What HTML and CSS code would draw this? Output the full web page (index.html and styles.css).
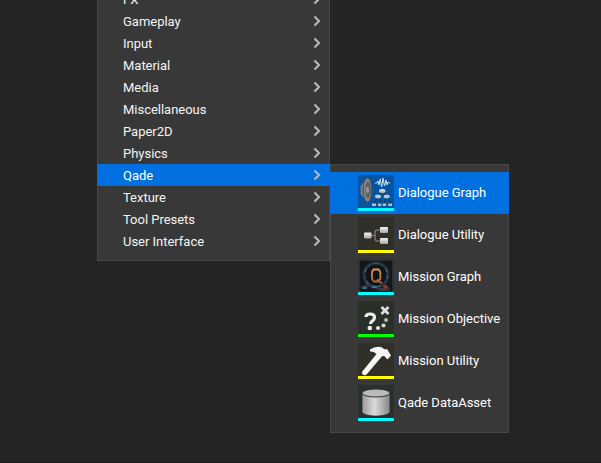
FILE: index.html
```html
<!DOCTYPE html>
<html lang="en">
<head>
<meta charset="utf-8">
<title>Asset menu</title>
<link rel="stylesheet" href="styles.css">
</head>
<body>
<svg class="defs" width="0" height="0"><defs>
<symbol id="chev" viewBox="0 0 8 12"><path d="M1.5 1.5 6 6 1.5 10.5" fill="none" stroke="#b9b9b9" stroke-width="2.1"/></symbol>
<linearGradient id="metal"><stop offset="0" stop-color="#999"/><stop offset=".45" stop-color="#dadada"/><stop offset="1" stop-color="#858585"/></linearGradient>
<linearGradient id="node" x2="0" y2="1"><stop offset="0" stop-color="#f4f4f4"/><stop offset="1" stop-color="#a5a5a5"/></linearGradient>
<linearGradient id="gold" x2="0" y2="1"><stop offset="0" stop-color="#d99a5c"/><stop offset="1" stop-color="#a85a2c"/></linearGradient>
</defs></svg>
<main class="screen">
<ul class="menu">
<li><span>FX</span><svg class="chev"><use href="#chev"/></svg></li>
<li><span>Gameplay</span><svg class="chev"><use href="#chev"/></svg></li>
<li><span>Input</span><svg class="chev"><use href="#chev"/></svg></li>
<li><span>Material</span><svg class="chev"><use href="#chev"/></svg></li>
<li><span>Media</span><svg class="chev"><use href="#chev"/></svg></li>
<li><span>Miscellaneous</span><svg class="chev"><use href="#chev"/></svg></li>
<li><span>Paper2D</span><svg class="chev"><use href="#chev"/></svg></li>
<li><span>Physics</span><svg class="chev"><use href="#chev"/></svg></li>
<li class="active"><span>Qade</span><svg class="chev"><use href="#chev"/></svg></li>
<li><span>Texture</span><svg class="chev"><use href="#chev"/></svg></li>
<li><span>Tool Presets</span><svg class="chev"><use href="#chev"/></svg></li>
<li><span>User Interface</span><svg class="chev"><use href="#chev"/></svg></li>
</ul>
<ul class="submenu">
<li class="active"><svg class="icon audio" viewBox="0 0 36 36">
<path d="M2.500 11 9 3v24l-6.500-8z" fill="#777a7d"/>
<ellipse cx="9.500" cy="15" rx="4.300" ry="12" fill="#85888a" stroke="#4b5056"/>
<ellipse cx="10" cy="15" rx="2.800" ry="8.500" fill="#5c6064"/><ellipse cx="9.500" cy="15" rx="1.600" ry="3.300" fill="#909396"/>
<path d="M17 8h2l1-2 1 4 1.200-6 1.500 8L25 3l1.500 8L28 5l1 5 1-3 1 1h1" fill="none" stroke="#c5e2f6" stroke-width="1"/>
<path d="m24 17-4 3m5-3 4 3m-10 3-3 6m5-6 2 6m5-6-2 6m4-6 3 6" stroke="#123a63" stroke-width="1.300" fill="none"/>
<ellipse cx="24.300" cy="16" rx="3.300" ry="2.100" fill="url(#node)"/><ellipse cx="20" cy="21.500" rx="3" ry="1.900" fill="#b9c5cf"/><ellipse cx="28.700" cy="21.500" rx="3" ry="1.900" fill="#b9c5cf"/>
<path d="M14 29.800h4m2 0h3.300m1.500 0h3.300m2.200 0h3.700" stroke="#b2bfca" stroke-width="2.600"/>
<path class="cyan" d="M0 33h36v3H0z"/></svg><span>Dialogue Graph</span></li>
<li><svg class="icon olive" viewBox="0 0 36 36">
<path d="M13 18.500h4M22 13h-2.500q-2.500 0-2.500 2.500v6q0 2.500 2.500 2.500H22" fill="none" stroke="#858585" stroke-width="1.200"/>
<rect x="6" y="15.500" width="7.500" height="6" rx="1" fill="url(#node)"/><rect x="22" y="10" width="8" height="6" rx="1" fill="url(#node)"/><rect x="22" y="21" width="8" height="6" rx="1" fill="url(#node)"/>
<path class="yellow" d="M0 33h36v3H0z"/></svg><span>Dialogue Utility</span></li>
<li><svg class="icon teal" viewBox="0 0 36 36">
<path d="M2 2h32v31H2z" fill="#14151e"/>
<circle cx="18" cy="16" r="12" fill="#111319" stroke="#24323c" stroke-width="3"/>
<circle cx="18" cy="16" r="11.500" fill="none" stroke="#376f80" stroke-width="1.100" stroke-dasharray="4 3 1 5"/>
<path d="M3 29q8-5 14-1l5 3 10-1" fill="none" stroke="#293643" stroke-width="3"/>
<path d="M5 29h4m5-1h5" stroke="#3a8d9b" stroke-width="1.300"/>
<path d="M15.500 10.500h5l1.800 2.500v7L20 22.500h-4L14 20v-7zM19 20.500l5 4" fill="none" stroke="url(#gold)" stroke-width="1.800"/>
<path d="m25 27 3-1 2 2-3 2zM22 30h6" fill="#943c30" stroke="#823127"/>
<path class="cyan" d="M0 33h36v3H0z"/></svg><span>Mission Graph</span></li>
<li><svg class="icon green" viewBox="0 0 36 36">
<path d="M8 16q0-3 4-3 4.500 0 4.500 3.500 0 2-2 3.300-2 1.200-2 3.200" fill="none" stroke="#eee" stroke-width="3.200"/>
<circle cx="11.800" cy="27" r="2.300" fill="#eee"/><path d="m23.500 6 7 7m0-7-7 7" stroke="#dedede" stroke-width="2.800"/>
<circle cx="28" cy="19" r="1.900" fill="#bbb"/><circle cx="25.500" cy="24.500" r="2.100" fill="#d4d4d4"/><circle cx="20" cy="27" r="2" fill="#e4e4e4"/>
<path class="lime" d="M0 33h36v3H0z"/></svg><span>Mission Objective</span></li>
<li><svg class="icon olive" viewBox="0 0 36 36">
<path d="M12 6.500q5-3.500 11-2.500l4 2.500 2-.5 4 6.500-3.500 4-3-3.200-2-.3-1.500 1.500L9 31q-1.800 2-4 .800-2-1.700-.500-3.500L18.500 11q-2.500-3-6.500-2.500z" fill="#f6f6f6"/>
<path class="yellow" d="M0 33h36v3H0z"/></svg><span>Mission Utility</span></li>
<li><svg class="icon teal" viewBox="0 0 36 36">
<path d="M4 8v18.500c0 6 28 6 28 0V8" fill="url(#metal)" stroke="#202323" stroke-width=".7"/>
<ellipse cx="18" cy="8" rx="14" ry="4" fill="#bababa" stroke="#222525" stroke-width=".9"/>
<path class="cyan" d="M0 33h36v3H0z"/></svg><span>Qade DataAsset</span></li>
</ul>
</main>
</body>
</html>
```
FILE: styles.css
```css
* { box-sizing: border-box; }
html, body { margin: 0; height: 100%; overflow: hidden; }
body { background: #242424; color: #fff; font: 13px/22px Roboto, sans-serif; letter-spacing: -.02px; }
.defs { display: block; height: 0; }
.screen { display: flex; align-items: flex-start; height: 463px; padding-left: 97px; overflow: hidden; border-bottom: 1px solid #1d191b; }
ul { list-style: none; margin: 0; padding: 0; }
.menu, .submenu { background: #383838; border: 1px solid #484848; }
.menu { width: 233px; margin-top: -21px; padding: 8px 0; flex: none; }
.menu li { display: flex; align-items: center; justify-content: space-between; height: 22px; padding: 0 8px 0 25px; color: #f4f4f4; }
.menu span { padding-top: 2px; }
.chev { width: 8px; height: 12px; flex: none; }
.menu li.active, .submenu li.active { background: #0070e0; color: #fff; margin: 0 -1px; }
.menu li.active { padding: 0 9px 0 26px; }
.submenu { width: 179px; margin-top: 164px; padding: 7px 0 8px; flex: none; }
.submenu li { display: flex; align-items: center; gap: 4px; height: 42px; padding-left: 27px; white-space: nowrap; }
.submenu li.active { padding-left: 28px; }
.icon { width: 36px; height: 36px; flex: none; }
.audio { background: #0755a1; }
.olive { background: #303028; }
.teal { background: #283030; }
.green { background: #283028; }
.cyan { fill: #00ffff; }
.yellow { fill: #ffff00; }
.lime { fill: #00ff00; }
```
